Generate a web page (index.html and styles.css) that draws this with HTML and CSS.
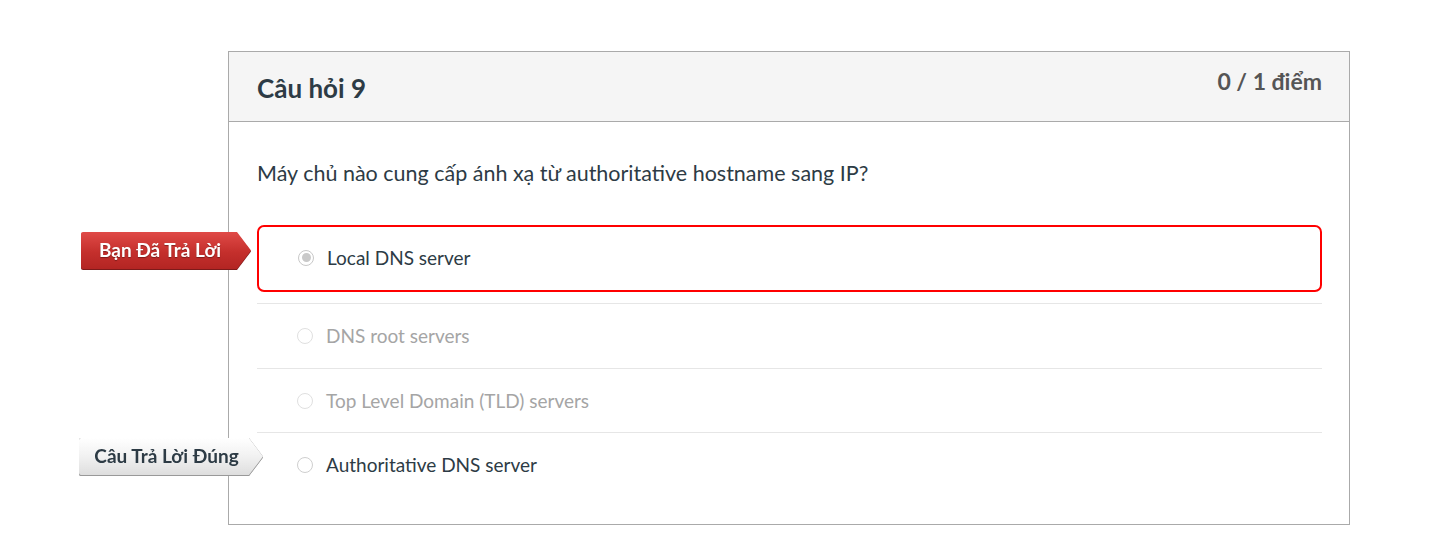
FILE: index.html
```html
<!DOCTYPE html>
<html lang="vi">
<head>
<meta charset="utf-8">
<link rel="stylesheet" href="styles.css">
</head>
<body>
<div class="page">
  <div class="card">
    <div class="card-header">
      <h2 class="title">Câu hỏi 9</h2>
      <div class="points">0 / 1 điểm</div>
    </div>
    <div class="card-body">
      <p class="question">Máy chủ nào cung cấp ánh xạ từ authoritative hostname sang IP?</p>
      <div class="answers">
        <div class="answer selected">
          <span class="tag tag-wrong"><span class="tag-inner">Bạn Đã Trả Lời</span></span>
          <span class="radio checked"></span>
          <span class="answer-text">Local DNS server</span>
        </div>
        <div class="answer muted">
          <span class="radio"></span>
          <span class="answer-text">DNS root servers</span>
        </div>
        <div class="answer muted short">
          <span class="radio"></span>
          <span class="answer-text">Top Level Domain (TLD) servers</span>
        </div>
        <div class="answer">
          <span class="tag tag-correct"><span class="tag-inner">Câu Trả Lời Đúng</span></span>
          <span class="radio"></span>
          <span class="answer-text">Authoritative DNS server</span>
        </div>
      </div>
    </div>
  </div>
</div>
</body>
</html>
```

FILE: styles.css
```css
* { box-sizing: border-box; }
html, body { margin: 0; padding: 0; background: #fff; }
body { font-family: Lato, "Noto Sans", sans-serif; color: #2d3b45; }

.page { padding: 51px 0 0 228px; }

.card {
  width: 1122px;
  height: 474px;
  border: 1px solid #aaa;
  background: #fff;
}

.card-header {
  height: 70px;
  background: #f5f5f5;
  border-bottom: 1px solid #aaa;
  display: flex;
  justify-content: space-between;
  align-items: flex-start;
  padding: 0 27px 0 28px;
}

.title {
  margin: 0;
  padding-top: 19px;
  font-size: 26px;
  font-weight: 700;
  line-height: 34px;
  color: #2d3b45;
}

.points {
  padding-top: 14px;
  font-size: 23px;
  font-weight: 700;
  line-height: 30px;
  color: #555;
}

.card-body { padding: 35px 27px 0 28px; }

.question {
  margin: 0 0 36px;
  font-size: 21.5px;
  line-height: 32px;
  color: #2d3b45;
}

.answers { display: flex; flex-direction: column; }

.answer {
  position: relative;
  display: flex;
  align-items: center;
  height: 65px;
  border-top: 1px solid #e6e6e6;
  padding-left: 40px;
  font-size: 19px;
}
.answer.short { height: 64px; }

.answer.selected {
  height: 67px;
  border: 2px solid #f00;
  border-radius: 7px;
  padding-left: 39px;
  padding-bottom: 2px;
  margin-bottom: 11px;
}

.answer.muted { color: #a5a5a5; }

.radio {
  width: 16px;
  height: 16px;
  border-radius: 50%;
  border: 1px solid #cfcfcf;
  background: #fff;
  margin-right: 13px;
  flex: none;
  position: relative;
}
.answer.muted .radio { border-color: #e0e0e0; }
.radio.checked { border-color: #c8c8c8; }
.radio.checked::after {
  content: "";
  position: absolute;
  left: 2.5px; top: 2.5px;
  width: 9px; height: 9px;
  border-radius: 50%;
  background: #c9c9c9;
}

.answer-text { line-height: 24px; }

/* overlay tags to the left of the card */
.tag {
  position: absolute;
  display: block;
}
.tag-inner {
  display: flex;
  align-items: center;
  justify-content: center;
  height: 100%;
  font-size: 19px;
  font-weight: 700;
  clip-path: polygon(0 0, calc(100% - 14px) 0, 100% 50%, calc(100% - 14px) 100%, 0 100%);
}
.tag-wrong {
  left: -178px;
  top: 5px;
  width: 170px;
  height: 37px;
  filter: drop-shadow(0 1px 0 #7d1a1a);
}
.tag-wrong .tag-inner {
  background: linear-gradient(#e04a47, #c42f2c 55%, #b32523);
  color: #fff;
  padding-right: 12px;
  padding-bottom: 2px;
  border-radius: 2px;
  text-shadow: 0 1px 1px rgba(0,0,0,0.35);
}
.tag-correct {
  left: -178px;
  top: 5px;
  width: 184px;
  height: 37px;
  filter: drop-shadow(0 0 0.6px #888) drop-shadow(0 1px 0 #999);
}
.tag-correct .tag-inner {
  background: linear-gradient(#ffffff, #f1f1f1 50%, #dedede);
  color: #2d3b45;
  padding-right: 9px;
  padding-bottom: 2px;
  border-radius: 2px;
}
```
